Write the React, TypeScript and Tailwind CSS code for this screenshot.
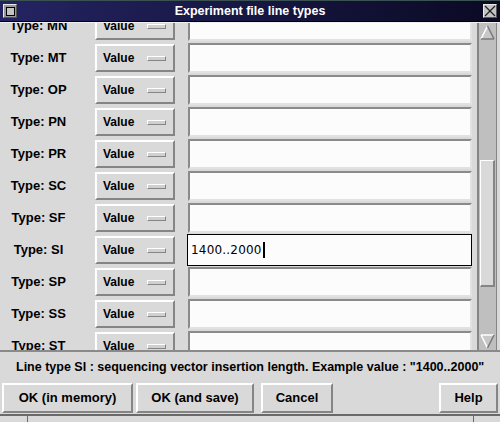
import React from 'react';

const types = ['MN', 'MT', 'OP', 'PN', 'PR', 'SC', 'SF', 'SI', 'SP', 'SS', 'ST'];

const raised = 'border-2 border-t-white border-l-white border-b-[#858585] border-r-[#858585]';

const ValueButton = () => (
  <div className={`ml-[18px] h-[28px] w-[80px] flex items-center bg-[#d9d9d9] ${raised}`}>
    <span className="ml-[6px] text-[12px] font-bold text-black">Value</span>
    <span className="ml-auto mr-[7px] h-[5px] w-[19px] border border-t-white border-l-white border-b-[#858585] border-r-[#858585] bg-[#d0d0d0]" />
  </div>
);

const Row = ({ t }: { t: string }) => {
  const focused = t === 'SI';
  return (
    <div className="h-[32px] flex items-center shrink-0">
      <div className="w-[77px] text-center text-[13px] font-bold text-black">Type: {t}</div>
      <ValueButton />
      {focused ? (
        <div className="ml-[12px] h-[32px] w-[285px] border border-black bg-[#fcfcfc] flex items-center">
          <span className="ml-[3px] text-[12px] text-black tracking-[0.2px]" style={{ fontFamily: '"DejaVu Sans", sans-serif' }}>
            1400..2000
          </span>
          <span className="ml-[1px] h-[16px] w-[2px] bg-black" />
        </div>
      ) : (
        <div className="ml-[13px] h-[30px] w-[284px] border-2 border-t-[#8a8a8a] border-l-[#8a8a8a] border-b-[#e2e2e2] border-r-[#e2e2e2] bg-[#fcfcfc]" />
      )}
    </div>
  );
};

const UpArrow = () => (
  <svg width="15" height="15" viewBox="0 0 15 15" className="block">
    <polygon points="7.5,1 14,14 1,14" fill="#c8c8c8" />
    <line x1="7.5" y1="1" x2="1" y2="14" stroke="#ffffff" strokeWidth="1.5" />
    <line x1="7.5" y1="1" x2="14" y2="14" stroke="#7a7a7a" strokeWidth="1.5" />
    <line x1="1" y1="14" x2="14" y2="14" stroke="#7a7a7a" strokeWidth="1.5" />
  </svg>
);

const DownArrow = () => (
  <svg width="15" height="15" viewBox="0 0 15 15" className="block">
    <polygon points="1,1 14,1 7.5,14" fill="#c8c8c8" />
    <line x1="1" y1="1" x2="14" y2="1" stroke="#ffffff" strokeWidth="1.5" />
    <line x1="1" y1="1" x2="7.5" y2="14" stroke="#ffffff" strokeWidth="1.5" />
    <line x1="14" y1="1" x2="7.5" y2="14" stroke="#7a7a7a" strokeWidth="1.5" />
  </svg>
);

const Btn = ({ label, w, ml }: { label: string; w: string; ml: string }) => (
  <div className={`${w} ${ml} h-[30px] flex items-center justify-center bg-[#d9d9d9] ${raised} text-[13px] font-bold text-black`}>
    {label}
  </div>
);

export default function App() {
  return (
    <div
      className="w-[500px] h-[422px] bg-[#d9d9d9] flex flex-col overflow-hidden select-none"
      style={{ fontFamily: '"Liberation Sans", Arial, sans-serif' }}
    >
      {/* title bar */}
      <div className="h-[22px] shrink-0 border-t border-t-[#3c5252] border-b border-b-black bg-gradient-to-r from-[#242463] to-[#0a0a24] flex items-center relative">
        <div className="ml-[3px] h-[14px] w-[14px] border border-t-[#e8e8e8] border-l-[#e8e8e8] border-b-[#555] border-r-[#555] bg-[#9a9a9a] flex items-center justify-center">
          <div className="h-[9px] w-[9px] border border-black bg-[#c4c4c4]" />
        </div>
        <div className="flex-1 text-center text-white text-[12.5px] font-bold">Experiment file line types</div>
        <div className="mr-[3px] h-[14px] w-[14px] border border-t-[#e8e8e8] border-l-[#e8e8e8] border-b-[#555] border-r-[#555] bg-[#c4c4c4] flex items-center justify-center">
          <svg width="12" height="12" viewBox="0 0 12 12">
            <line x1="1" y1="1" x2="11" y2="11" stroke="#222" strokeWidth="1.3" />
            <line x1="11" y1="1" x2="1" y2="11" stroke="#222" strokeWidth="1.3" />
          </svg>
        </div>
      </div>

      {/* list + scrollbar */}
      <div className="h-[330px] shrink-0 flex border-t border-t-[#f0f0f0] border-b-2 border-b-[#8a8a8a]">
        <div className="w-[477px] overflow-hidden">
          <div className="-mt-[13px] flex flex-col">
            {types.map((t) => (
              <Row key={t} t={t} />
            ))}
          </div>
        </div>
        <div className="w-[20px] border-l-2 border-l-[#858585] border-r border-r-[#858585] bg-[#bfbfbf] flex flex-col items-center pt-[2px]">
          <UpArrow />
          <div className="h-[120px]" />
          <div className="h-[127px] w-[15px] border border-t-white border-l-white border-b-2 border-r-2 border-b-[#858585] border-r-[#858585] bg-[#d9d9d9]" />
          <div className="flex-1" />
          <div className="mb-[1px]">
            <DownArrow />
          </div>
        </div>
      </div>

      {/* info */}
      <div className="h-[31px] shrink-0 flex items-center pl-[16px] text-[12.5px] font-bold text-black whitespace-nowrap">
        Line type SI : sequencing vector insertion length. Example value : "1400..2000"
      </div>

      {/* buttons */}
      <div className="h-[31px] shrink-0 flex items-start px-[2px]">
        <Btn label="OK (in memory)" w="w-[131px]" ml="ml-0" />
        <Btn label="OK (and save)" w="w-[118px]" ml="ml-[3px]" />
        <Btn label="Cancel" w="w-[72px]" ml="ml-[7px]" />
        <div className="flex-1" />
        <Btn label="Help" w="w-[59px]" ml="ml-0" />
      </div>

      {/* bottom strip */}
      <div className="flex-1 border-t-2 border-t-[#6a6a6a] flex">
        <div className="w-[28px] border-r border-r-[#6a6a6a]" />
        <div className="flex-1" />
        <div className="w-[27px] border-l border-l-[#6a6a6a]" />
      </div>
    </div>
  );
}
